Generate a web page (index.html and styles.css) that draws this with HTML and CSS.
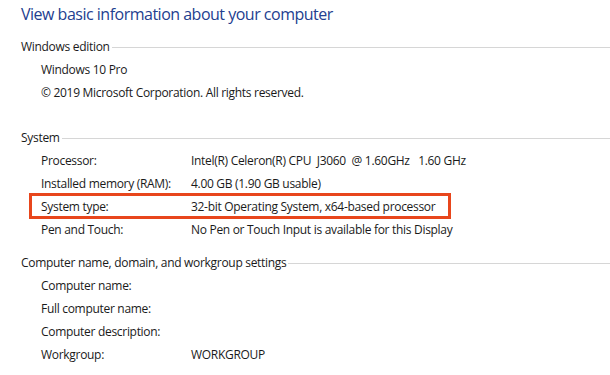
FILE: index.html
```html
<!DOCTYPE html>
<html lang="en">
<head>
    <meta charset="UTF-8">
    <title>System</title>
    <link rel="stylesheet" href="styles.css">
</head>
<body>
    <h1 class="title">View basic information about your computer</h1>

    <section class="group group-edition">
        <div class="group-head"><span>Windows edition</span></div>
        <div class="row"><span class="value-only">Windows 10 Pro</span></div>
        <div class="row"><span class="value-only">&copy; 2019 Microsoft Corporation. All rights reserved.</span></div>
    </section>

    <section class="group group-system">
        <div class="group-head"><span>System</span></div>
        <div class="row"><span class="label">Processor:</span><span class="value">Intel(R) Celeron(R) CPU&nbsp; J3060&nbsp; @ 1.60GHz&nbsp;&nbsp; 1.60 GHz</span></div>
        <div class="row"><span class="label">Installed memory (RAM):</span><span class="value">4.00 GB (1.90 GB usable)</span></div>
        <div class="row highlight"><span class="label">System type:</span><span class="value">32-bit Operating System, x64-based processor</span></div>
        <div class="row"><span class="label">Pen and Touch:</span><span class="value">No Pen or Touch Input is available for this Display</span></div>
    </section>

    <section class="group group-name">
        <div class="group-head"><span>Computer name, domain, and workgroup settings</span></div>
        <div class="row"><span class="label">Computer name:</span><span class="value"></span></div>
        <div class="row"><span class="label">Full computer name:</span><span class="value"></span></div>
        <div class="row"><span class="label">Computer description:</span><span class="value"></span></div>
        <div class="row"><span class="label">Workgroup:</span><span class="value">WORKGROUP</span></div>
    </section>
</body>
</html>
```

FILE: styles.css
```css
body {
    margin: 0;
    padding: 0 0 0 21px;
    background-color: #fff;
    color: #1a1a1a;
    font-family: "Open Sans", "Noto Sans", sans-serif;
    font-size: 12px;
    letter-spacing: -0.3px;
    overflow: hidden;
}
.title {
    margin: 3px 0 8px;
    font-size: 16px;
    font-weight: normal;
    letter-spacing: -0.5px;
    line-height: 23px;
    color: #23408f;
}
.group {
    margin-bottom: 9px;
}
.group-edition {
    margin-bottom: 21px;
}
.group-head {
    display: flex;
    align-items: center;
    height: 24px;
}
.group-head span {
    padding-right: 2px;
}
.group-head::after {
    content: "";
    flex: 1;
    border-top: 1px solid #d6d6d6;
    margin-top: 2px;
}
.row {
    display: flex;
    height: 23px;
    line-height: 23px;
    margin-left: 20px;
}
.label {
    width: 150px;
    flex-shrink: 0;
}
.highlight {
    position: relative;
}
.highlight::after {
    content: "";
    position: absolute;
    left: -12px;
    top: -2px;
    width: 416px;
    height: 20px;
    border: 3px solid #e8461c;
}
```
